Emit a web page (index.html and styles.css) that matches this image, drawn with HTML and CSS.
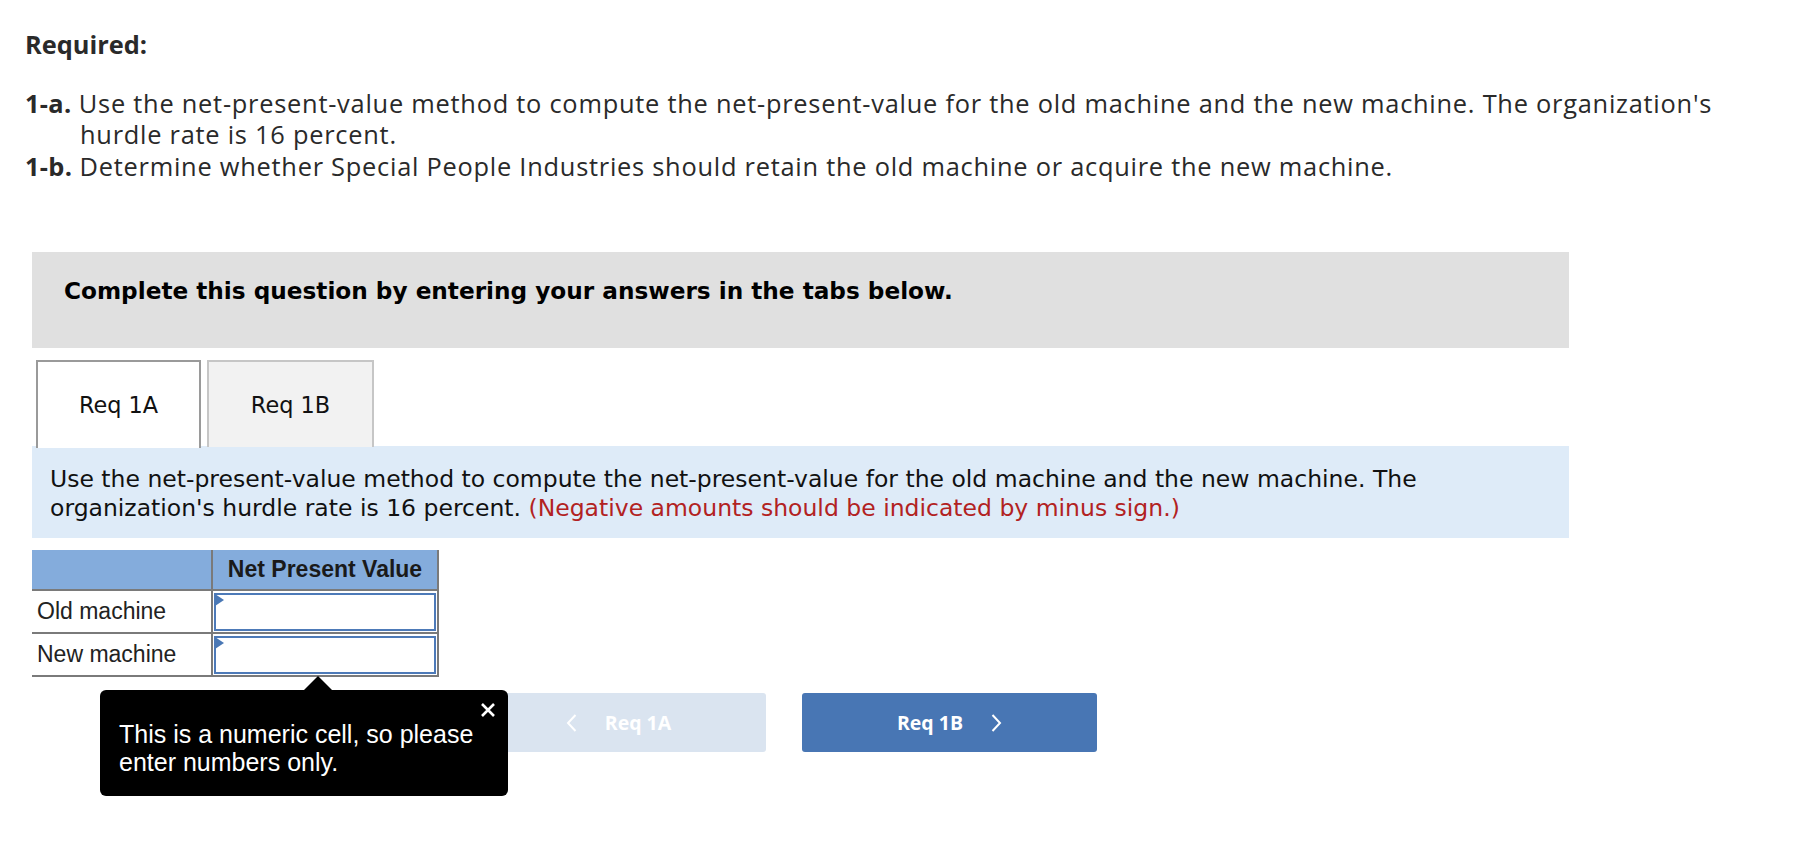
FILE: index.html
```html
<!DOCTYPE html>
<html>
<head>
<meta charset="utf-8">
<link rel="stylesheet" href="styles.css">
</head>
<body>
<div class="page">
  <div class="required">
    <h2 class="req-title">Required:</h2>
    <p class="item"><b>1-a.</b> Use the net-present-value method to compute the net-present-value for the old machine and the new machine. The organization's hurdle rate is 16 percent.</p>
    <p class="item"><b>1-b.</b> Determine whether Special People Industries should retain the old machine or acquire the new machine.</p>
  </div>

  <div class="panel">
    <div class="banner">Complete this question by entering your answers in the tabs below.</div>

    <div class="tabs">
      <div class="tab active">Req 1A</div>
      <div class="tab">Req 1B</div>
    </div>

    <div class="instr">Use the net-present-value method to compute the net-present-value for the old machine and the new machine. The organization's hurdle rate is 16 percent. <span class="neg">(Negative amounts should be indicated by minus sign.)</span></div>

    <table class="grid">
      <tr>
        <th class="corner"></th>
        <th class="colhead">Net Present Value</th>
      </tr>
      <tr>
        <td class="label">Old machine</td>
        <td class="cell"><div class="input"><span class="flag"></span></div></td>
      </tr>
      <tr>
        <td class="label">New machine</td>
        <td class="cell"><div class="input"><span class="flag"></span></div></td>
      </tr>
    </table>

    <div class="nav">
      <button class="btn prev"><svg class="chev" viewBox="0 0 11 18" width="11" height="18"><polyline points="9.5,1 2,9 9.5,17" fill="none" stroke="#fff" stroke-width="2"/></svg><span>Req 1A</span></button>
      <button class="btn next"><span>Req 1B</span><svg class="chev" viewBox="0 0 11 18" width="11" height="18"><polyline points="1.5,1 9,9 1.5,17" fill="none" stroke="#fff" stroke-width="2"/></svg></button>
    </div>

    <div class="tooltip">
      <span class="tip-arrow"></span>
      <svg class="tip-close" viewBox="0 0 16 16" width="16" height="16"><path d="M2 2 L14 14 M14 2 L2 14" stroke="#fff" stroke-width="2.6" fill="none"/></svg>
      <div class="tip-text">This is a numeric cell, so please enter numbers only.</div>
    </div>
  </div>
</div>
</body>
</html>
```
FILE: styles.css
```css
html, body {
  margin: 0;
  padding: 0;
  background: #fff;
}

.page {
  position: relative;
  width: 1794px;
  height: 846px;
  overflow: hidden;
}

.required {
  padding: 29px 0 0 25px;
  font-family: "Open Sans", "Lato", sans-serif;
  color: #2a2a2a;
  font-size: 25.4px;
  line-height: 31.5px;
}

.req-title {
  margin: 0 0 27px 0;
  font-size: 25.4px;
  font-weight: 700;
  line-height: 31.5px;
  letter-spacing: 0;
}

.item {
  margin: 0;
  width: 1700px;
  padding-left: 55px;
  text-indent: -55px;
  letter-spacing: 0.75px;
}

.item b {
  font-weight: 700;
  letter-spacing: 0.3px;
}

.panel {
  position: relative;
  margin: 70px 0 0 32px;
  width: 1537px;
}

.banner {
  background: #e0e0e0;
  height: 96px;
  box-sizing: border-box;
  padding: 25px 0 0 32px;
  font-family: "DejaVu Sans", Verdana, sans-serif;
  font-weight: 700;
  font-size: 23.2px;
  line-height: 28px;
  color: #000;
}

.tabs {
  display: flex;
  gap: 6px;
  margin-top: 12px;
  padding-left: 4px;
  height: 86px;
}

.tab {
  width: 167px;
  height: 87px;
  box-sizing: border-box;
  border: 2px solid #c6c6c6;
  border-bottom: none;
  background: #f2f2f2;
  display: flex;
  align-items: center;
  justify-content: center;
  font-family: "DejaVu Sans", Verdana, sans-serif;
  font-size: 22.4px;
  color: #111;
  position: relative;
  z-index: 1;
}

.tab.active {
  width: 165px;
  background: #fff;
  border-color: #9a9a9a;
  height: 88px;
}

.instr {
  background: #deebf8;
  height: 92px;
  box-sizing: border-box;
  padding: 19px 18px 0 18px;
  font-family: "DejaVu Sans", Verdana, sans-serif;
  font-size: 23.5px;
  line-height: 29px;
  color: #111;
}

.neg {
  color: #b22222;
}

.grid {
  margin-top: 12px;
  border-collapse: collapse;
  font-family: "Liberation Sans", Arial, sans-serif;
  font-size: 23px;
  color: #222;
}

.grid th {
  background: #84acdc;
  height: 39px;
  padding: 0;
  border-bottom: 2px solid #7a7a7a;
  border-right: 2px solid #7a7a7a;
}

.grid th.corner {
  width: 179px;
}

.grid th.colhead {
  width: 224px;
  font-weight: 700;
  text-align: center;
  color: #1a1a1a;
}

.grid td {
  padding: 0;
  height: 39px;
  border-bottom: 2px solid #7a7a7a;
  border-right: 2px solid #7a7a7a;
}

.grid td.label {
  padding-left: 5px;
}

.grid td.cell {
  padding: 1px;
}

.input {
  position: relative;
  height: 38px;
  box-sizing: border-box;
  border: 2px solid #4d7ab8;
  background: #fff;
}

.flag {
  position: absolute;
  left: -1px;
  top: -1px;
  width: 0;
  height: 0;
  border-top: 6px solid transparent;
  border-bottom: 6px solid transparent;
  border-left: 9px solid #4a78b5;
}

.nav {
  display: flex;
  gap: 36px;
  margin-top: 16px;
  padding-left: 439px;
}

.btn {
  width: 295px;
  height: 59px;
  border: none;
  border-radius: 3px;
  display: flex;
  align-items: center;
  justify-content: center;
  gap: 28px;
  font-family: "Open Sans", "Lato", sans-serif;
  font-weight: 700;
  font-size: 19.5px;
  color: #fff;
  padding: 0;
}

.btn.prev {
  background: #dae4f0;
}

.btn.next {
  background: #4876b4;
}

.chev {
  display: block;
}

.tooltip {
  position: absolute;
  left: 68px;
  top: 438px;
  width: 408px;
  height: 106px;
  box-sizing: border-box;
  background: #000;
  border-radius: 6px;
  padding: 30px 20px 0 19px;
  color: #fff;
  font-family: "Liberation Sans", Arial, sans-serif;
  font-size: 25px;
  line-height: 28px;
  z-index: 5;
}

.tip-arrow {
  position: absolute;
  left: 204px;
  top: -14px;
  width: 0;
  height: 0;
  border-left: 14px solid transparent;
  border-right: 14px solid transparent;
  border-bottom: 14px solid #000;
}

.tip-close {
  position: absolute;
  right: 12px;
  top: 12px;
}

.tip-text {
  width: 370px;
}
```
